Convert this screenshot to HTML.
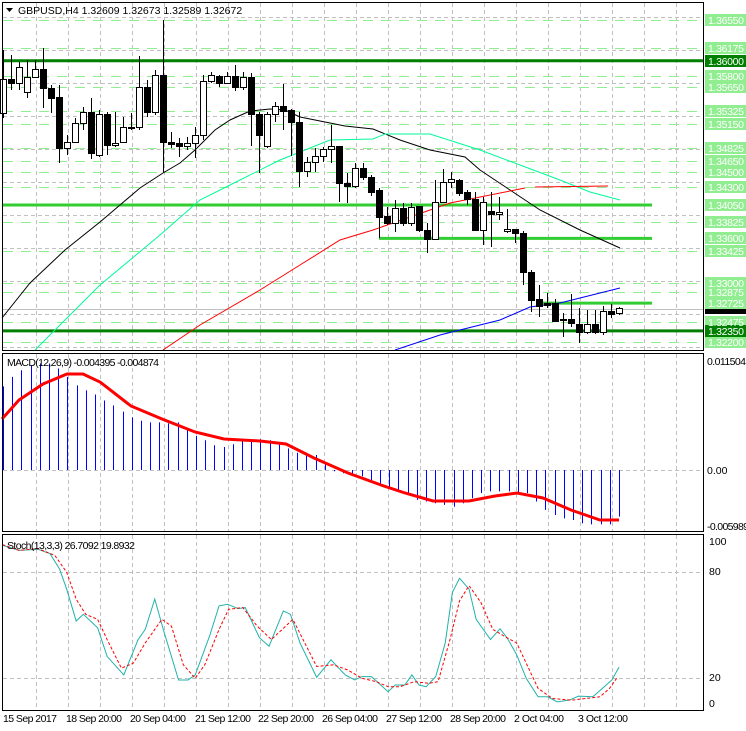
<!DOCTYPE html>
<html><head><meta charset="utf-8"><style>
body{margin:0;background:#fff;width:746px;height:731px;overflow:hidden}
svg{display:block}
text{font-family:"Liberation Sans",sans-serif;font-size:10.5px}
</style></head><body>
<svg id="s" width="746" height="731" xmlns="http://www.w3.org/2000/svg">
<g id="grid"></g>
<g id="lev"></g>
<g id="ma" fill="none"></g>
<g id="cd"></g>
<g id="ind"></g>
<rect x="2.5" y="2.5" width="701" height="348" fill="none" stroke="#000"/>
<rect x="2.5" y="353.5" width="701" height="178" fill="none" stroke="#000"/>
<rect x="2.5" y="534.5" width="701" height="176" fill="none" stroke="#000"/>
<g id="lbl"></g>
<path d="M6 8 L13 8 L9.5 12 Z" fill="#000"/>
<text x="18" y="14">GBPUSD,H4  1.32609 1.32673 1.32589 1.32672</text>
<text x="7" y="366" textLength="152">MACD(12,26,9) -0.004395 -0.004874</text>
<text x="7" y="549" textLength="128">Stoch(13,3,3) 26.7092 19.8932</text>
<text x="707" y="365" textLength="39">0.011504</text>
<text x="707" y="474">0.00</text>
<text x="707" y="530" textLength="42">-0.005989</text>
<text x="709" y="545">100</text>
<text x="709" y="575">80</text>
<text x="709" y="681">20</text>
<text x="709" y="707">0</text>
<g font-size="10">
<text x="3" y="722" textLength="54">15 Sep 2017</text>
<text x="66" y="722" textLength="56">18 Sep 20:00</text>
<text x="130" y="722" textLength="56">20 Sep 04:00</text>
<text x="195" y="722" textLength="56">21 Sep 12:00</text>
<text x="258" y="722" textLength="56">22 Sep 20:00</text>
<text x="322" y="722" textLength="56">26 Sep 04:00</text>
<text x="386" y="722" textLength="56">27 Sep 12:00</text>
<text x="450" y="722" textLength="56">28 Sep 20:00</text>
<text x="514" y="722" textLength="50">2 Oct 04:00</text>
<text x="578" y="722" textLength="50">3 Oct 12:00</text>
</g>
<g id="txt" fill="#fff"></g>
</svg>
<script>
var NS="http://www.w3.org/2000/svg";
function el(p,t,a){var e=document.createElementNS(NS,t);for(var k in a)e.setAttribute(k,a[k]);document.getElementById(p).appendChild(e);return e;}
var vx=[36,68,100,132,164,196,228,260,292,324,356,388,420,452,484,516,548,580,612,644,676];
vx.forEach(function(x){[[3,350],[354,531],[535,710]].forEach(function(r){el("grid","line",{x1:x+.5,x2:x+.5,y1:r[0],y2:r[1],stroke:"#c0c0c0","stroke-dasharray":"4,3"});});});
for(var y=17;y<350;y+=33)el("grid","line",{x1:3,x2:703,y1:y+.5,y2:y+.5,stroke:"#c0c0c0","stroke-dasharray":"4,3"});
[470,572,678].forEach(function(y){el("grid","line",{x1:3,x2:703,y1:y+.5,y2:y+.5,stroke:"#c0c0c0","stroke-dasharray":"4,3"});});
function P(p){return 20+(1.3655-p)*7402;}
var lv=[1.3655,1.36175,1.358,1.3565,1.35325,1.3515,1.34825,1.3465,1.345,1.343,1.33825,1.33425,1.33,1.32875,1.32475,1.322];
lv.forEach(function(p){var y=Math.round(P(p));el("lev","line",{x1:3,x2:703,y1:y+.5,y2:y+.5,stroke:"#90ee90","stroke-dasharray":"10,8"});});
el("lev","line",{x1:3,x2:703,y1:309.5,y2:309.5,stroke:"#c0c0c0"});
[[1.36,3,703,"#008000"],[1.3235,3,703,"#008000"],[1.3405,3,652,"#32cd32"],[1.336,379,652,"#32cd32"],[1.32725,540,652,"#32cd32"]].forEach(function(a){var y=P(a[0]);el("lev","line",{x1:a[1],x2:a[2],y1:y,y2:y,stroke:a[3],"stroke-width":3});});
function pl(g,pts,c,w,d){var a={points:pts.map(function(p){return p.join(",")}).join(" "),stroke:c,"stroke-width":w||1,fill:"none"};if(d)a["stroke-dasharray"]=d;el(g,"polyline",a);}
pl("ma",[[2,318],[30,283],[65,250],[100,222],[120,205],[140,188],[163,173],[180,163],[195,150],[215,130],[230,120],[250,111],[270,109],[285,110],[300,117],[320,121],[345,126],[373,129],[400,140],[430,150],[465,157],[480,170],[510,190],[540,210],[580,230],[620,248]],"#000");
pl("ma",[[35,350],[55,330],[100,285],[160,235],[200,200],[240,180],[280,160],[330,140],[373,139],[385,134],[430,134],[480,150],[520,165],[560,180],[590,192],[620,200]],"#00fa9a");
pl("ma",[[163,350],[200,325],[260,290],[300,265],[340,240],[373,230],[450,203],[525,188]],"#f00");
pl("ma",[[535,187],[608,186]],"#f00");
pl("ma",[[395,350],[440,335],[500,320],[530,307],[560,303],[580,298],[620,288]],"#00f");
var C=[[1,79,113,50,118],[0,79,83,55,90],[1,67,83,62,90],[1,77,92,60,98],[1,69,77,60,78],[0,69,88,48,108],[0,88,98,85,113],[0,97,148,85,163],[1,142,148,135,155],[1,123,142,118,143],[1,112,123,107,130],[0,112,153,98,159],[1,114,155,110,157],[0,114,145,112,155],[1,143,145,112,147],[1,127,142,117,143],[1,127,128,113,130],[1,87,127,56,130],[0,87,112,80,117],[1,75,112,70,115],[0,75,142,20,173],[0,142,144,132,148],[0,143,146,138,157],[1,143,146,137,150],[1,135,143,127,158],[1,81,135,75,140],[1,75,81,72,83],[0,76,83,75,87],[1,76,83,72,83],[0,76,87,65,91],[1,77,87,72,90],[0,77,114,73,146],[0,114,135,112,173],[1,114,146,112,148],[1,106,114,102,122],[0,106,111,84,130],[0,110,122,109,156],[0,122,171,112,187],[1,162,171,157,177],[1,156,162,148,172],[1,149,156,147,162],[1,146,149,125,163],[0,146,183,146,202],[0,183,186,173,203],[1,168,186,163,188],[0,168,177,163,180],[0,177,192,175,196],[0,190,217,188,238],[0,216,223,207,225],[1,208,223,200,232],[0,208,223,203,226],[1,207,223,203,226],[0,206,230,206,232],[0,230,239,223,253],[1,202,239,180,240],[1,182,202,169,202],[1,179,182,172,188],[0,180,193,179,196],[0,192,199,190,205],[0,199,230,192,230],[1,202,230,197,245],[0,211,214,192,247],[1,212,214,197,220],[1,229,231,209,233],[0,229,233,229,243],[0,233,272,231,285],[0,272,300,270,312],[0,299,306,285,317],[0,303,305,293,308],[0,303,321,299,321],[0,319,320,313,337],[0,319,323,294,327],[0,324,332,308,343],[1,324,332,310,334],[0,324,332,310,334],[1,311,332,306,335],[0,311,314,304,318],[1,308,313,307,315]];
C.forEach(function(c,i){var x=3+8*i;el("cd","line",{x1:x+.5,x2:x+.5,y1:c[3],y2:c[4],stroke:"#000"});var h=Math.max(c[2]-c[1],1);el("cd","rect",{x:x-2.5,y:c[1]+.5,width:6,height:h,fill:c[0]?"#fff":"#000",stroke:"#000"});});
// MACD histogram
var H=[108,80,60,45,40,40,55,80,105,120,132,150,165,183,200,210,215,215,218,215,235,255,268,283,288,280,265,265,265,268,280,292,305,305,312,340,360,366,370,375,388,400,410,415,430,445,450,455,460,465,455,440,425,420,420,420,425,425,450,475,490,500,505,515,518,518,518,495];
var n=H.length;
for(var i=0;i<n;i++){var x=3+i*(616/(n-1));var y=H[i]/2.97+350;el("ind","line",{x1:Math.round(x)+.5,x2:Math.round(x)+.5,y1:470,y2:y,stroke:"#00f"});}
function cv(a){return a.map(function(p){return [p[0]/2.1,p[1]/2.97+350];});}
pl("ind",[[2,419],[19,400],[43,384],[67,374],[83,374],[100,382],[131,406],[162,419],[195,432],[224,439],[260,441],[286,444],[314,458],[348,473],[381,485],[405,493],[433,501],[469,501],[495,496],[517,493],[543,498],[571,510],[600,520],[619,520]],"#f00",3);
pl("ind",cv([[5,580],[40,595],[80,592],[105,605],[125,650],[140,710],[160,805],[175,785],[205,825],[225,910],[260,965],[290,860],[305,830],[325,740],[345,840],[375,980],[395,980],[410,965],[440,850],[460,760],[478,755],[500,768],[515,765],[545,855],[565,880],[595,775],[610,785],[630,870],[665,972],[695,920],[725,965],[745,980],[760,970],[780,970],[815,1015],[830,995],[850,995],[865,965],[880,995],[895,1000],[915,970],[935,870],[950,720],[965,678],[985,710],[1000,800],[1030,860],[1050,828],[1065,855],[1085,905],[1105,975],[1130,1030],[1150,1030],[1170,1045],[1195,1040],[1215,1028],[1245,1030],[1265,1005],[1285,980],[1300,942]]),"#20b2aa");
pl("ind",cv([[5,578],[40,595],[80,590],[115,610],[140,660],[160,740],[180,785],[205,800],[225,860],[255,945],[280,930],[305,870],[340,800],[360,820],[385,935],[410,975],[430,935],[460,830],[480,770],[510,765],[540,820],[570,860],[615,800],[640,870],[665,940],[700,935],[730,950],[760,975],[790,985],[815,1000],[840,1000],[870,985],[900,990],[920,985],[945,860],[965,745],[985,700],[1010,750],[1035,830],[1065,855],[1085,870],[1105,930],[1130,1005],[1160,1035],[1200,1040],[1230,1035],[1260,1030],[1280,1005],[1295,975]]),"#f00",1,"3,2");
// labels
el("lbl","rect",{x:705,y:303,width:41,height:11,fill:"#000"});
var L=lv.concat([1.36,1.3235,1.3405,1.336,1.32725]);
L.forEach(function(p){var y=P(p);var dark=(p==1.36||p==1.3235);el("lbl","rect",{x:705,y:Math.round(y)-6,width:41,height:12,fill:dark?"#008000":"#90ee90"});var t=el("txt","text",{x:708,y:Math.round(y)+4,textLength:36});t.textContent=p.toFixed(5);});
</script>
</body></html>
